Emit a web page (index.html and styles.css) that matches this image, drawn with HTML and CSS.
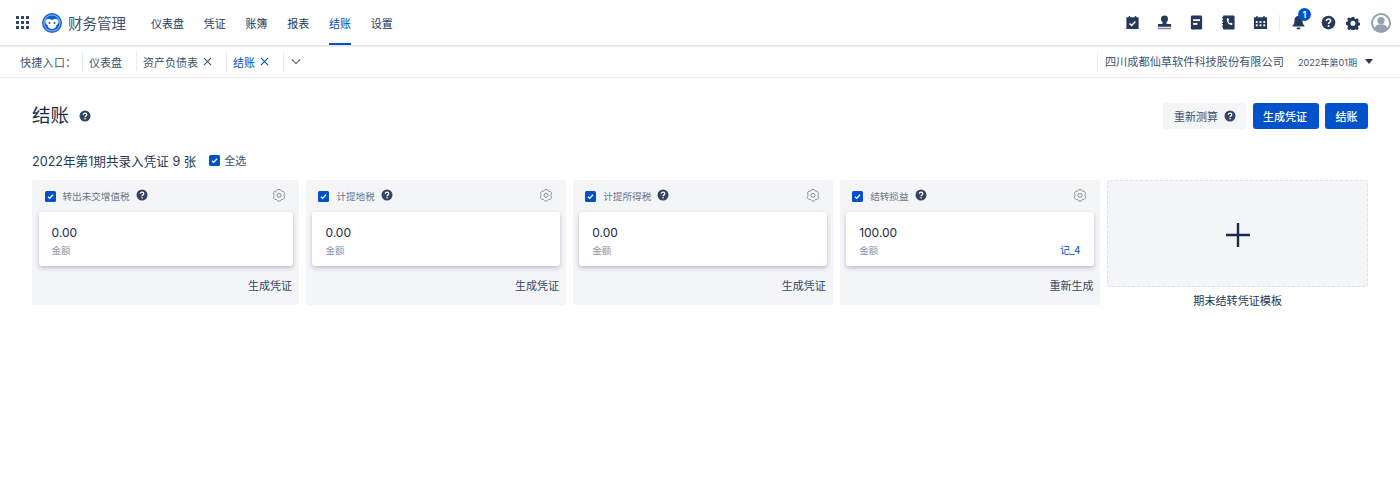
FILE: index.html
```html
<!DOCTYPE html>
<html lang="zh-CN">
<head>
<meta charset="utf-8">
<title>结账</title>
<link rel="stylesheet" href="styles.css">
</head>
<body>
<svg class="defs" width="0" height="0" aria-hidden="true">
  <symbol id="help" viewBox="0 0 24 24"><circle cx="12" cy="12" r="11" fill="currentColor"/><path d="M8.6 9.6c0-2 1.500-3.200 3.500-3.200s3.400 1.200 3.400 2.900c0 2.600-3.400 2.600-3.400 5" fill="none" stroke="#fff" stroke-width="2.600"/><circle cx="12.100" cy="17.600" r="1.600" fill="#fff"/></symbol>
  <symbol id="gear" viewBox="0 0 24 24"><path d="M9.300 3.400c.4-1.600 5-1.600 5.400 0 .3 1.200 1.500 1.800 2.600 1.400 1.500-.6 3.900 3.400 2.700 4.500-.9.900-.9 2.500 0 3.400 1.200 1.100-1.200 5.100-2.700 4.500-1.100-.4-2.300.2-2.600 1.400-.4 1.600-5 1.600-5.400 0-.3-1.200-1.500-1.800-2.600-1.400-1.500.6-3.900-3.400-2.700-4.500.9-.9.900-2.500 0-3.400-1.200-1.100 1.200-5.100 2.700-4.500 1.100.4 2.300-.2 2.600-1.400z" fill="none" stroke="#6b778c" stroke-width="1.200" stroke-linejoin="round"/><circle cx="12" cy="11" r="3" fill="none" stroke="#6b778c" stroke-width="1.200"/></symbol>
  <symbol id="check" viewBox="0 0 14 14"><rect width="14" height="14" rx="2" fill="#0052cc"/><path d="M3.800 7.300l2.200 2.100 4.200-4.600" fill="none" stroke="#fff" stroke-width="1.700"/></symbol>
  <symbol id="x" viewBox="0 0 10 10"><path d="M1 1l8 8M9 1L1 9" fill="none" stroke="currentColor" stroke-width="1.200"/></symbol>
</svg>
<header class="topbar">
  <svg class="apps" viewBox="0 0 13 13" aria-hidden="true"><g fill="#344563"><rect x="0" y="0" width="3" height="3"/><rect x="5" y="0" width="3" height="3"/><rect x="10" y="0" width="3" height="3"/><rect x="0" y="5" width="3" height="3"/><rect x="5" y="5" width="3" height="3"/><rect x="10" y="5" width="3" height="3"/><rect x="0" y="10" width="3" height="3"/><rect x="5" y="10" width="3" height="3"/><rect x="10" y="10" width="3" height="3"/></g></svg>
  <svg class="logo" viewBox="0 0 20 20" aria-hidden="true"><circle cx="10" cy="10" r="10" fill="#1565d8"/><circle cx="10" cy="10" r="8.600" fill="#8fbaf0"/><circle cx="10" cy="10" r="7.600" fill="#0f5fd0"/><path d="M3.600 7.400c1.500-1.800 3.700-1.500 6.400-.4 2.700-1.100 4.900-1.400 6.400.4.700 2.200-.2 3.900-1.900 4.600-.3 2.500-2.200 4-4.500 4s-4.200-1.500-4.500-4c-1.700-.7-2.600-2.400-1.900-4.600z" fill="#fff"/><circle cx="7.500" cy="10" r="1" fill="#0f5fd0"/><circle cx="12.500" cy="10" r="1" fill="#0f5fd0"/></svg>
  <span class="brand">财务管理</span>
  <nav class="nav">
    <a class="nav-item">仪表盘</a>
    <a class="nav-item">凭证</a>
    <a class="nav-item">账簿</a>
    <a class="nav-item">报表</a>
    <a class="nav-item active">结账</a>
    <a class="nav-item">设置</a>
  </nav>
  <div class="tools">
    <svg class="tool" viewBox="0 0 16 16" aria-hidden="true"><path fill="#253858" d="M1.500 2.500h2.500V1h1.500v1.500h5V1H12v1.500h2.500v12.500h-13z"/><path d="M4.800 9l2.300 2.200 4-4.200" fill="none" stroke="#fff" stroke-width="1.500"/></svg>
    <svg class="tool" viewBox="0 0 16 16" aria-hidden="true"><circle cx="8" cy="4.200" r="3.700" fill="#253858"/><path fill="#253858" d="M6 6h4v2.500c0 .6.300 1 .8 1H15v3H1v-3h4.200c.5 0 .8-.4.800-1z"/><rect x="1" y="13.500" width="14" height="1.800" fill="#8993a4"/></svg>
    <svg class="tool" viewBox="0 0 16 16" aria-hidden="true"><rect x="2" y=".5" width="12" height="15" rx="1.500" fill="#253858"/><rect x="4.300" y="4.500" width="7.400" height="2" fill="#fff"/><rect x="4.300" y="8.500" width="4.700" height="2" fill="#fff"/></svg>
    <svg class="tool" viewBox="0 0 16 16" aria-hidden="true"><rect x="2" y=".5" width="12.500" height="15" rx="1.200" fill="#253858"/><path d="M1 3h2.200M1 6h2.200M1 9h2.200M1 12h2.200" stroke="#253858" stroke-width="1"/><path d="M6.200 3.800l1.500-.5 1 2.300-1 .8c.3 1 .9 1.800 1.800 2.300l.9-.8 2 1.300-.6 1.500c-3 .6-6.200-3.500-5.600-6.900z" fill="#fff"/></svg>
    <svg class="tool" viewBox="0 0 16 16" aria-hidden="true"><path fill="#253858" d="M1 2.500h2.500V1H5v1.500h6V1h1.500v1.500H15V15H1z"/><g fill="#fff"><rect x="3" y="6.500" width="2" height="2"/><rect x="7" y="6.500" width="2" height="2"/><rect x="11" y="6.500" width="2" height="2"/><rect x="3" y="10" width="2" height="2"/><rect x="7" y="10" width="2" height="2"/><rect x="11" y="10" width="2" height="2"/></g></svg>
    <span class="tool-sep"></span>
    <span class="bell">
      <svg class="bell-icon" viewBox="0 0 16 16" aria-hidden="true"><path fill="#253858" d="M8 1c2.800 0 4.300 2.100 4.300 4.800 0 3 .7 4.300 2 5.500v1H1.700v-1c1.300-1.200 2-2.500 2-5.500C3.700 3.100 5.200 1 8 1z"/><rect x="6" y="13.300" width="4" height="1.800" rx=".9" fill="#253858"/></svg>
      <span class="badge">1</span>
    </span>
    <svg class="round-help"><use href="#help"/></svg>
    <svg class="cog" viewBox="0 0 16 16" aria-hidden="true"><path fill-rule="evenodd" fill="#253858" d="M6.600 1h2.800l.4 1.900 1.300.6 1.700-1 1.900 2-1 1.600.5 1.300 1.800.5v2.800l-1.800.5-.5 1.300 1 1.600-1.900 2-1.700-1-1.300.5-.4 1.900H6.600l-.4-1.900-1.300-.5-1.700 1-1.900-2 1-1.600-.5-1.300L0 9.700V6.900l1.800-.5.500-1.300-1-1.600 1.900-2 1.700 1 1.300-.6zM8 5.400a2.900 2.900 0 1 0 0 5.800 2.900 2.900 0 0 0 0-5.800z"/></svg>
    <svg class="avatar" viewBox="0 0 20 20" aria-hidden="true"><circle cx="10" cy="10" r="9" fill="#fff" stroke="#97a0af" stroke-width="2"/><circle cx="10" cy="7.600" r="3.600" fill="#97a0af"/><path d="M3.500 15.500c.8-3 3.200-4.200 6.500-4.200s5.700 1.200 6.500 4.200C15 17.500 12.600 18.500 10 18.500s-5-1-6.500-3z" fill="#97a0af"/></svg>
  </div>
</header>
<div class="quickbar">
  <span class="quick-label">快捷入口：</span>
  <span class="quick-tab">仪表盘</span>
  <span class="quick-tab">资产负债表<svg class="close"><use href="#x"/></svg></span>
  <span class="quick-tab current">结账<svg class="close"><use href="#x"/></svg></span>
  <span class="quick-tab more"><svg class="chev" viewBox="0 0 12 8" aria-hidden="true"><path d="M1 1.500l5 5 5-5" fill="none" stroke="#42526e" stroke-width="1.300"/></svg></span>
  <div class="quick-right">
    <span class="company">四川成都仙草软件科技股份有限公司</span>
    <span class="period">2022年第01期</span>
    <span class="caret"></span>
  </div>
</div>
<main class="page">
  <div class="page-head">
    <div class="title-wrap">
      <h1 class="title">结账</h1>
      <svg class="title-help"><use href="#help"/></svg>
    </div>
    <div class="actions">
      <button class="btn btn-light">重新测算<svg class="btn-help"><use href="#help"/></svg></button>
      <button class="btn btn-primary wide">生成凭证</button>
      <button class="btn btn-primary">结账</button>
    </div>
  </div>
  <div class="summary">
    <span class="summary-text">2022年第1期共录入凭证 9 张</span>
    <svg class="cb"><use href="#check"/></svg>
    <span class="select-all">全选</span>
  </div>
  <div class="cards">
    <section class="card">
      <div class="card-head"><svg class="cb"><use href="#check"/></svg><span class="card-name">转出未交增值税</span><svg class="card-help"><use href="#help"/></svg><svg class="gear"><use href="#gear"/></svg></div>
      <div class="amount-box"><div class="amount">0.00</div><div class="amount-foot"><span>金额</span></div></div>
      <div class="card-action">生成凭证</div>
    </section>
    <section class="card">
      <div class="card-head"><svg class="cb"><use href="#check"/></svg><span class="card-name">计提地税</span><svg class="card-help"><use href="#help"/></svg><svg class="gear"><use href="#gear"/></svg></div>
      <div class="amount-box"><div class="amount">0.00</div><div class="amount-foot"><span>金额</span></div></div>
      <div class="card-action">生成凭证</div>
    </section>
    <section class="card">
      <div class="card-head"><svg class="cb"><use href="#check"/></svg><span class="card-name">计提所得税</span><svg class="card-help"><use href="#help"/></svg><svg class="gear"><use href="#gear"/></svg></div>
      <div class="amount-box"><div class="amount">0.00</div><div class="amount-foot"><span>金额</span></div></div>
      <div class="card-action">生成凭证</div>
    </section>
    <section class="card">
      <div class="card-head"><svg class="cb"><use href="#check"/></svg><span class="card-name">结转损益</span><svg class="card-help"><use href="#help"/></svg><svg class="gear"><use href="#gear"/></svg></div>
      <div class="amount-box"><div class="amount">100.00</div><div class="amount-foot"><span>金额</span><a class="voucher">记_4</a></div></div>
      <div class="card-action">重新生成</div>
    </section>
    <section class="add-col">
      <div class="add-box"><svg class="plus" viewBox="0 0 24 24" aria-hidden="true"><path d="M12 0v24M0 12h24" stroke="#172b4d" stroke-width="2.400"/></svg></div>
      <div class="add-label">期末结转凭证模板</div>
    </section>
  </div>
</main>
</body>
</html>
```
FILE: styles.css
```css
* { box-sizing: border-box; }
html, body { margin: 0; padding: 0; }
body {
  width: 1400px;
  height: 480px;
  overflow: hidden;
  background: #fff;
  color: #172b4d;
  font-family: Inter, "Noto Sans CJK SC", sans-serif;
  font-size: 12px;
}
.defs { position: absolute; }
.topbar {
  height: 45px;
  display: flex;
  align-items: center;
  padding-left: 16px;
  box-shadow: 0 1px 2px rgba(9, 30, 66, 0.2);
  position: relative;
}
.apps { width: 13px; height: 13px; margin-right: 13px; }
.logo { width: 20px; height: 20px; margin-right: 6px; }
.brand { font-size: 14.500px; color: #42526e; width: 58px; white-space: nowrap; }
.nav { display: flex; height: 45px; margin-left: 25px; gap: 19.750px; }
.nav-item { display: flex; align-items: center; color: #253858; font-size: 11px; white-space: nowrap; border-bottom: 2px solid transparent; padding-top: 3px; }
.nav-item.active { color: #0052cc; border-bottom-color: #0052cc; }
.tools { margin-left: auto; display: flex; align-items: center; padding-right: 9px; }
.tool { width: 15px; height: 15px; margin-right: 17px; }
.tool-sep { width: 1px; height: 16px; background: #ebecf0; margin-right: 11px; margin-left: -5.500px; }
.bell { position: relative; width: 16px; height: 16px; margin-right: 14px; }
.bell-icon { width: 15px; height: 15px; display: block; }
.badge {
  position: absolute;
  left: 7px;
  top: -7px;
  width: 13px;
  height: 13px;
  border-radius: 50%;
  background: #0052cc;
  color: #fff;
  font-size: 9px;
  font-weight: 600;
  line-height: 13px;
  text-align: center;
}
.round-help { width: 15px; height: 15px; color: #253858; margin-right: 10px; }
.cog { width: 14px; height: 14px; margin-right: 11px; }
.avatar { width: 20px; height: 20px; }
.quickbar {
  height: 31px;
  margin-top: 1px;
  display: flex;
  align-items: center;
  padding-left: 20px;
  box-shadow: 0 1px 1px rgba(9, 30, 66, 0.08);
  color: #42526e;
  font-size: 11px;
}
.quick-label { width: 62px; white-space: nowrap; letter-spacing: 0.3px; }
.quick-tab {
  display: flex;
  align-items: center;
  height: 20px;
  padding: 0 14px 0 6px;
  border-left: 1px solid #ebecf0;
  white-space: nowrap;
}
.quick-tab.current { color: #0052cc; }
.close { width: 9px; height: 9px; margin-left: 5px; }
.more { padding: 0 0 0 7px; }
.chev { width: 10px; height: 7px; }
.quick-right { margin-left: auto; display: flex; align-items: center; padding-right: 27px; height: 20px; }
.company { border-left: 1px solid #ebecf0; padding-left: 7px; color: #42526e; font-size: 11.200px; line-height: 20px; }
.period { color: #42526e; font-size: 9.100px; margin-left: 14px; }
.caret { width: 0; height: 0; border: 4px solid transparent; border-top: 5px solid #253858; border-bottom: 0; margin-left: 8px; }
.page { padding: 0 32px; }
.page-head { display: flex; justify-content: space-between; align-items: center; margin-top: 26px; height: 26px; }
.title-wrap { display: flex; align-items: center; padding-bottom: 2px; }
.title { margin: 0; font-size: 18.500px; font-weight: 400; line-height: 26px; color: #172b4d; }
.title-help { width: 12px; height: 12px; color: #344563; margin-left: 10px; margin-top: 2px; }
.actions { display: flex; gap: 6px; }
.btn {
  height: 26px;
  border: 0;
  border-radius: 3px;
  font-family: inherit;
  font-size: 11px;
  white-space: nowrap;
  display: flex;
  align-items: center;
  padding: 0 10.500px;
}
.btn-light { background: #f4f5f7; color: #42526e; margin-right: 1px; width: 83px; padding: 0 10px 0 11px; }
.btn-help { width: 12px; height: 12px; flex: none; color: #344563; margin-left: 6px; }
.btn-primary { background: #0052cc; color: #fff; font-weight: 500; }
.wide { width: 66px; padding: 0 10px; }
.summary { display: flex; align-items: center; margin-top: 22px; height: 18px; }
.summary-text { font-size: 12.600px; color: #253858; margin-right: 13px; }
.cb { width: 11px; height: 11px; flex: none; }
.select-all { font-size: 11px; color: #42526e; margin-left: 4px; }
.cards {
  display: grid;
  grid-template-columns: 267px 260px 260px 260.800px 260.600px;
  column-gap: 6.900px;
  margin-top: 11px;
}
.card { background: #f4f5f7; border-radius: 3px; height: 125px; padding: 7px 6px 0 6.500px; }
.card-head { display: flex; align-items: center; height: 18px; padding: 0 6px; }
.card-name { font-size: 9.600px; color: #6b778c; margin-left: 7px; }
.card-help { width: 12px; height: 12px; color: #344563; margin-left: 6px; margin-top: -2px; }
.gear { width: 16px; height: 16px; margin-left: auto; }
.amount-box {
  background: #fff;
  border-radius: 3px;
  box-shadow: 0 2px 4px rgba(9, 30, 66, 0.25);
  height: 54px;
  margin-top: 7px;
  padding: 13px 14px 0 13px;
}
.amount { font-size: 12px; line-height: 16px; color: #172b4d; }
.amount-foot { display: flex; justify-content: space-between; font-size: 9.500px; color: #8993a4; margin-top: 3px; line-height: 13px; }
.voucher { color: #0052cc; font-size: 10px; }
.card-action { text-align: right; margin-top: 12px; padding-right: 1px; font-size: 11px; color: #344563; line-height: 16px; }
.add-box {
  height: 107px;
  background: #f4f5f7;
  border: 1px dashed #dfe1e6;
  border-radius: 3px;
  display: flex;
  align-items: center;
  justify-content: center;
  padding-top: 3px;
}
.plus { width: 24px; height: 24px; }
.add-label { text-align: center; font-size: 11.100px; color: #253858; margin-top: 7px; line-height: 14px; }
```
